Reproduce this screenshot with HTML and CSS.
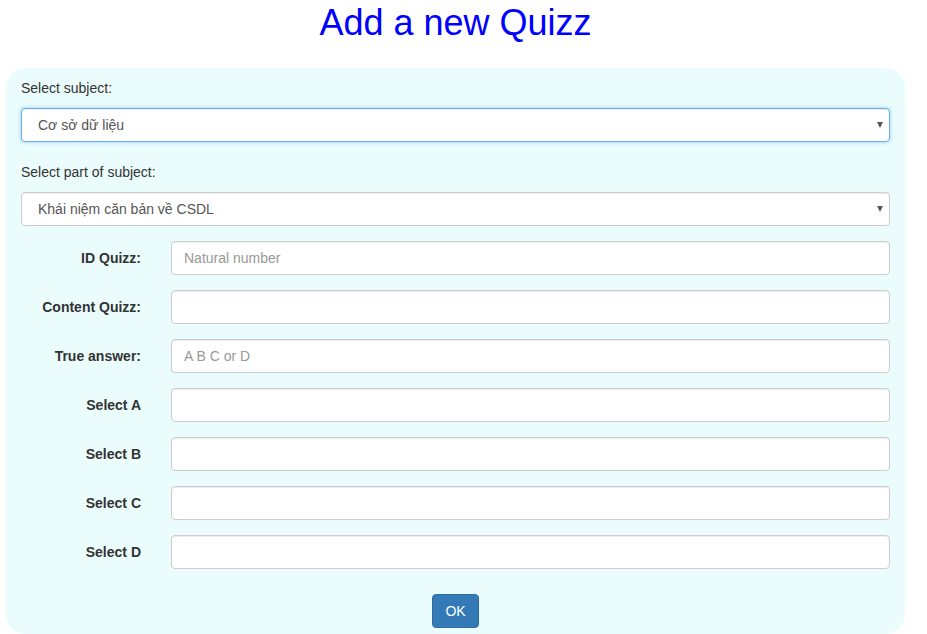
FILE: index.html
```html
<!DOCTYPE html>
<html lang="vi">
<head>
<meta charset="utf-8">
<title>Add a new Quizz</title>
<link rel="stylesheet" href="styles.css">
</head>
<body>
<div class="page">
  <h1 class="title">Add a new Quizz</h1>
  <form class="panel">
    <label class="top-label">Select subject:</label>
    <div class="select-wrap">
      <select class="control focus">
        <option>Cơ sở dữ liệu</option>
      </select>
    </div>
    <label class="top-label second">Select part of subject:</label>
    <div class="select-wrap">
      <select class="control">
        <option>Khái niệm căn bản về CSDL</option>
      </select>
    </div>
    <div class="rows">
      <div class="row"><label class="row-label">ID Quizz:</label><input class="control" placeholder="Natural number"></div>
      <div class="row"><label class="row-label">Content Quizz:</label><input class="control"></div>
      <div class="row"><label class="row-label">True answer:</label><input class="control" placeholder="A B C or D"></div>
      <div class="row"><label class="row-label">Select A</label><input class="control"></div>
      <div class="row"><label class="row-label">Select B</label><input class="control"></div>
      <div class="row"><label class="row-label">Select C</label><input class="control"></div>
      <div class="row"><label class="row-label">Select D</label><input class="control"></div>
    </div>
    <div class="actions"><button type="button" class="btn">OK</button></div>
  </form>
</div>
</body>
</html>
```

FILE: styles.css
```css
html, body {
  margin: 0;
  padding: 0;
  background: #fff;
  font-family: "Liberation Sans", Arial, Helvetica, sans-serif;
  font-size: 14px;
  color: #333;
}
.page {
  width: 899px;
  margin-left: 6px;
}
.title {
  margin: 0;
  height: 68px;
  font-size: 36px;
  font-weight: normal;
  line-height: 46px;
  text-align: center;
  color: #0000ff;
}
.panel {
  display: flex;
  flex-direction: column;
  background: #ebfcfd;
  border-radius: 20px;
  padding: 10px 15px 5px 15px;
  height: 566px;
  box-sizing: border-box;
}
.top-label {
  display: block;
  line-height: 20px;
  height: 20px;
  margin-bottom: 10px;
}
.top-label.second {
  margin-top: 20px;
}
.select-wrap {
  position: relative;
}
.select-wrap::after {
  content: "";
  position: absolute;
  right: 7px;
  top: 14px;
  border-left: 3.5px solid transparent;
  border-right: 3.5px solid transparent;
  border-top: 6px solid #555;
  pointer-events: none;
}
.control {
  display: block;
  width: 100%;
  height: 34px;
  box-sizing: border-box;
  padding: 6px 12px;
  font-family: inherit;
  font-size: 14px;
  color: #555;
  background: #fff;
  border: 1px solid #ccc;
  border-radius: 4px;
  box-shadow: inset 0 1px 1px rgba(0,0,0,0.075);
  outline: none;
}
select.control {
  -webkit-appearance: none;
  appearance: none;
  padding-left: 16px;
}
.control.focus {
  border-color: #66afe9;
  box-shadow: inset 0 1px 1px rgba(0,0,0,0.075), 0 0 4px rgba(102,175,233,0.6);
}
.control::placeholder {
  color: #999;
}
.rows {
  display: flex;
  flex-direction: column;
  gap: 15px;
  margin-top: 15px;
}
.row {
  display: grid;
  grid-template-columns: 150px 1fr;
  column-gap: 15px;
  margin-left: -15px;
}
.row-label {
  font-weight: bold;
  text-align: right;
  padding-right: 15px;
  line-height: 20px;
  padding-top: 7px;
}
.row .control {
  width: auto;
}
.actions {
  display: flex;
  justify-content: center;
  margin-top: 25px;
}
.btn {
  width: 47px;
  height: 34px;
  background: #337ab7;
  border: 1px solid #2e6da4;
  border-radius: 4px;
  color: #fff;
  font-family: inherit;
  font-size: 14px;
  padding: 0;
}
```
